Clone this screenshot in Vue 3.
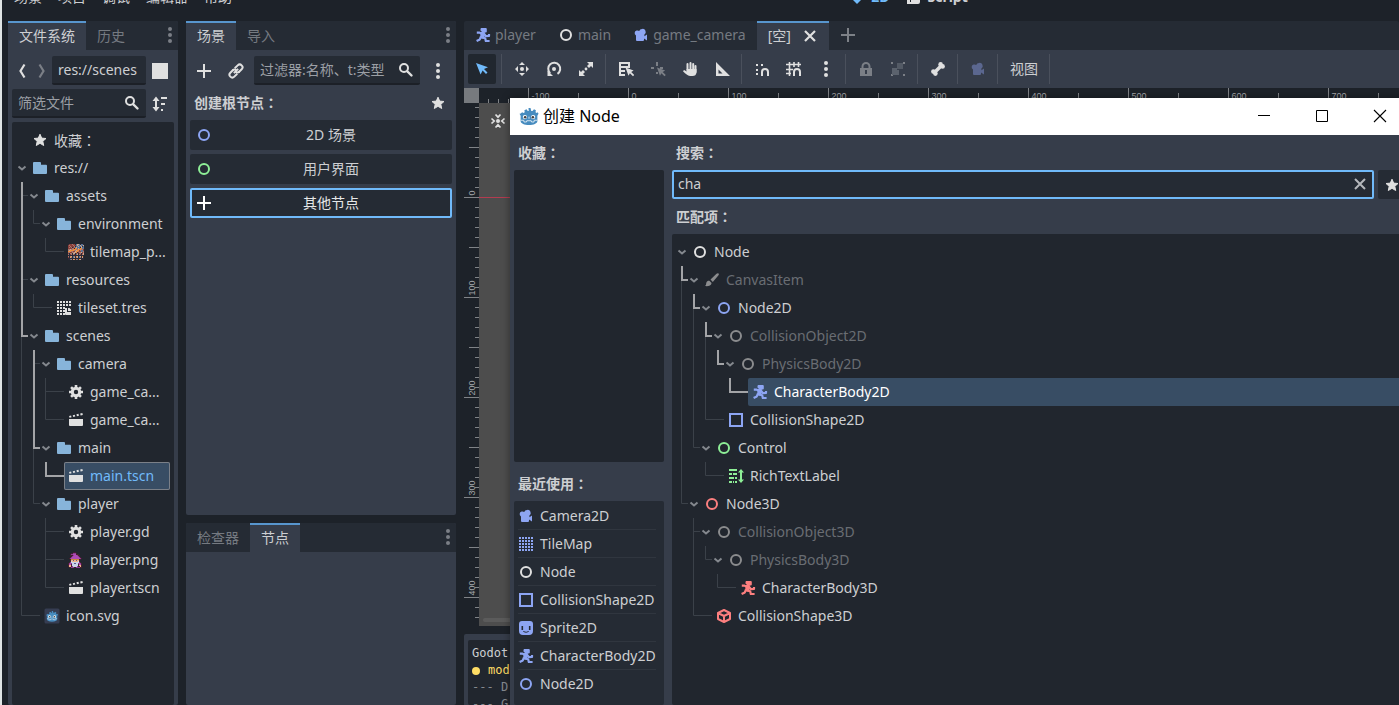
<script setup>
import { h, ref } from 'vue'

const W = '#e0e0e0'
const BLUE = '#8da5f3'
const RED = '#fc7f7f'
const GREEN = '#8eef97'
const GREY = '#8b8c8e'

const ring = (c) => `<circle cx="8" cy="8" r="5" fill="none" stroke="${c}" stroke-width="2"/>`
const runner = (c) =>
  `<g fill="none" stroke="${c}" stroke-width="2.2" stroke-linejoin="round"><path d="M1.8 5.6H4.6L7 7"/><path d="M8.800 6.500 11 9.200 14 9V7"/><path d="M7 10.500 10.200 11.200 10.800 14H14.600"/><path d="M6 9.500 4.800 12.400 1.600 14"/></g><path fill="${c}" d="M6.200 1H10.800a1 1 0 0 1 1 1v2.600a1 1 0 0 1-1 1H9.800L9.500 11.500H5L5.600 6 4.600 5H7L5.500 3.500V1.700z"/>`
const camera = (c) =>
  `<path fill="${c}" d="M9 2a3 3 0 0 0-2.800 2A2.600 2.600 0 0 0 3.600 3.600 2.600 2.600 0 0 0 3 8.400V13a1 1 0 0 0 1 1h6a1 1 0 0 0 1-1v-1.400l3 2V7.600l-2.600 1.600V7.400A3 3 0 0 0 9 2z"/>`
const gridDots = (n, size, step, c, skip = () => false) => {
  let s = ''
  for (let y = 0; y < n; y++)
    for (let x = 0; x < n; x++)
      if (!skip(x, y)) s += `<rect x="${1 + x * step}" y="${1 + y * step}" width="${size}" height="${size}" fill="${c}"/>`
  return s
}
const magnet = `<path fill="none" stroke="${W}" stroke-width="2" d="M8 15v-4a3 3 0 0 1 6 0v4"/>`
const cursor = 'M0 0l2.700 7.400 1.300-2.200 2.800 2.800 1.200-1.200-2.800-2.800L7.400 2.700z'

const pixels = (rows, palette) => {
  let s = ''
  rows.forEach((r, y) =>
    [...r].forEach((ch, x) => {
      if (palette[ch]) s += `<rect x="${x}" y="${y}" width="1" height="1" fill="${palette[ch]}"/>`
    })
  )
  return `<g shape-rendering="crispEdges">${s}</g>`
}
const godotHead = `<path fill="#478cbf" d="M1 6.200 2.600 5l.9.6L4.600 5l-.3-1.600L6 2.600l1 1.300h.8L7.600 1.600h1.600l.6 2.300h1L12 2.600l1.500.8L13.200 5l1 .6L15 5l.6 1.200-.9 1.600v4.200c0 2-3 3.200-6.700 3.200S1.300 14 1.300 12V7.800L.4 6.200z"/><circle cx="4.700" cy="8.800" r="1.700" fill="#fff"/><circle cx="11.300" cy="8.800" r="1.700" fill="#fff"/><circle cx="4.900" cy="8.900" r="1" fill="#414042"/><circle cx="11.100" cy="8.900" r="1" fill="#414042"/><path stroke="#fff" fill="none" stroke-width=".6" d="M1.500 11.400H3.800l.2 1.400h2l.2-1h3.600l.2 1h2l.2-1.400h2.300M8 8.500v1.700"/>`

const icons = {
  folder: '<path fill="#87b4da" d="M1 3a1 1 0 0 1 1-1h6a1 1 0 0 1 1 1v1.700h5a1 1 0 0 1 1 1V13a1 1 0 0 1-1 1H2a1 1 0 0 1-1-1z"/>',
  star: `<path fill="${W}" stroke="${W}" stroke-linejoin="round" d="m8 2.200 1.700 3.900 4.300.4-3.200 2.800.9 4.200L8 11.300l-3.700 2.200.9-4.200L2 6.500l4.300-.4z"/>`,
  gear: `<circle cx="8" cy="8" r="3.700" fill="none" stroke="${W}" stroke-width="3"/><path stroke="${W}" stroke-width="2.600" d="M8 1v3M8 12v3M1 8h3M12 8h3M3.050 3.050l2 2M10.950 10.950l2 2M3.050 12.950l2-2M10.950 5.050l2-2"/>`,
  scene: `<path fill="${W}" d="M1 7h14v6a1 1 0 0 1-1 1H2a1 1 0 0 1-1-1z"/><path stroke="${W}" stroke-width="2" d="m1.300 4.900 2-.5M5 4.100l2-.5M8.700 3.300l2-.5M12.400 2.500l2.200-.5"/>`,
  tileset: gridDots(5, 2, 3, W, (x, y) => x > 2 && y > 1) + `<path fill="${W}" d="M9 8h2v4h4v3H10a1 1 0 0 1-1-1zM12 8h1.500L15 9.500V11h-3z"/>`,
  tilemap: gridDots(5, 2, 3, BLUE),
  tiles: pixels(
    [
      '.aaabaa.cddc.cc.', 'abaaabaacdccdccd', 'aabaaab.ccdccd.c', 'abab.abcdccc.dcc',
      'aaaabb.eecdceecc', 'bbdbbeeebbeeebba', 'bdeeeebbdeeabcca', 'eeebbaadeebaaccb',
      'bbaabbdde.abbdab', 'a.bb.dd.ab.ab.ad', 'b.ab.ba.cd.ba.bd', '................',
      'b.ed.cb.ed.cd.e.', 'a.db.cd.bd.cb.d.', '................', '..cb.de.bc.ed...'
    ],
    { a: '#8b3f3a', b: '#a9796f', c: '#5a7596', d: '#c9a892', e: '#ef8c3b', '.': '#2b2a38' }
  ),
  wizard: pixels(
    [
      '.....rrr........', '...rrpppr.......', '..rppPPPrrr.....', '..rrrpPPPprr....',
      '...rpPPPPPpr....', '..rpPPPPPPPpr...', '.rpPPPPPPPPPpr..', '..roooooooorr...',
      '..ryykyykyyr....', '..rwyyyyyywr....', '.rpwwwwwwwwpr...', 'rpPpwwkkwwpPpr..',
      'rPPrwwwwwwrPPr..', 'ryyrwwwwwwryyr..', 'ryyrpwwwwprryr..', '.rrppprrpppprr..'
    ],
    { r: '#44202f', p: '#8d3c94', P: '#b04bb5', o: '#c9873f', y: '#f0b28a', w: '#c9d3ea', k: '#5d5b8a' }
  ),
  godotFile: `<rect width="15" height="15" x=".5" y=".5" rx="1.500" fill="#363d52"/><g transform="translate(1.800 1.800) scale(.78)">${godotHead}</g>`,
  godot: godotHead,
  node: ring(W), nodeGrey: ring(GREY), node2d: ring(BLUE), control: ring(GREEN), node3d: ring(RED),
  char2d: runner(BLUE), char3d: runner(RED),
  camera: camera(BLUE), cameraDim: camera('#5b678f'),
  shape2d: `<path fill="none" stroke="${BLUE}" stroke-width="2" d="M2 2h12v12H2z"/>`,
  shape3d: `<path fill="none" stroke="${RED}" stroke-width="2" stroke-linejoin="round" d="M8 2l6 3v6l-6 3-6-3V5zM2 5l6 3 6-3M8 8v6"/>`,
  sprite: `<path fill="${BLUE}" fill-rule="evenodd" d="M4 1h8a3 3 0 0 1 3 3v7a4 4 0 0 1-4 4H5a4 4 0 0 1-4-4V4a3 3 0 0 1 3-3zM3.500 6v4h1.600V6zm7.400 0v4h1.600V6zM5 11c.8 2.200 5.200 2.200 6 0l-.8 0c-.8.9-3.600.9-4.400 0z"/>`,
  brush: `<path fill="${GREY}" d="M14.500 1.500c.7.700.3 1.500-.2 2.100L8.800 9.900 6.500 7.600l6-5.800c.6-.5 1.400-.9 2-.3zM5.400 8.700l2.200 2.200C7.300 13.600 4 14.500 1 14c1.400-1 .9-2.300 1.400-3.600.5-1.300 1.700-2 3-1.700z"/>`,
  rich: `<path fill="none" stroke="${GREEN}" stroke-width="2" d="M1 2h8M1 6h3M5 6h4M1 10h5M7 10h2M1 14h3M5 14h1M7 14h2M13 3v10"/><path fill="${GREEN}" d="M13 1l3 3.500h-6zM13 15l3-3.500h-6z"/>`,
  plus: `<path stroke="${W}" stroke-width="2" d="M8 1v14M1 8h14"/>`,
  plusWhite: '<path stroke="#fff" stroke-width="2" d="M8 1v14M1 8h14"/>',
  plusDim: '<path stroke="#7d8187" stroke-width="2" d="M8 1v14M1 8h14"/>',
  close: `<path stroke="${W}" stroke-width="2.200" d="m3 3 10 10M13 3 3 13"/>`,
  clear: '<path stroke="#b4b7bb" stroke-width="2" d="m3 3 10 10M13 3 3 13"/>',
  dots: `<g fill="${W}"><circle cx="8" cy="2" r="2"/><circle cx="8" cy="8" r="2"/><circle cx="8" cy="14" r="2"/></g>`,
  dotsDim: '<g fill="#7b7f86"><circle cx="8" cy="2" r="2"/><circle cx="8" cy="8" r="2"/><circle cx="8" cy="14" r="2"/></g>',
  search: `<circle cx="6" cy="6" r="4" fill="none" stroke="${W}" stroke-width="2"/><path stroke="${W}" stroke-width="2.400" stroke-linecap="round" d="m9.500 9.500 4 4"/>`,
  link: `<g fill="none" stroke="${W}" stroke-width="2" transform="rotate(-45 8 8)"><path d="M7 5.200H2.800a2.800 2.800 0 0 0 0 5.600H7M9 5.200h4.200a2.800 2.800 0 0 1 0 5.600H9M5 8h6"/><path d="M6 5.200a2.800 2.800 0 0 1 2.800 2.800M10 10.800A2.800 2.800 0 0 1 7.200 8"/></g>`,
  back: `<path fill="none" stroke="${W}" stroke-width="2.200" d="M10.500 1.500 6.500 8l4 6.500"/>`,
  forward: '<path fill="none" stroke="#7b7f86" stroke-width="2.200" d="m5.500 1.500 4 6.500-4 6.500"/>',
  sort: `<path fill="none" stroke="${W}" stroke-width="2" d="M4 4v8M9 2h6M9 8h4M9 14h2"/><path fill="${W}" d="M4 .5 7.500 5h-7zM4 15.500 7.500 11h-7z"/>`,
  select: `<path fill="#70bafa" d="M2 2l4.600 11.500 2-4 3.400 3.500 1.500-1.500L10 8l4-1.700z"/>`,
  move: `<g fill="${W}"><circle cx="8" cy="8" r="2"/><path d="M8 1l3 3H5zM8 15l3-3H5zM1 8l3-3v6zM15 8l-3-3v6z"/></g>`,
  rotate: `<path fill="none" stroke="${W}" stroke-width="2" d="M4.200 12.200A6 6 0 1 1 11.500 12.800"/><circle cx="8" cy="8" r="2" fill="${W}"/><path fill="${W}" d="M1.500 9.500 7 15H1.500z"/>`,
  scale: `<path fill="${W}" d="M9 1h6v6l-2-2-2 2-2-2 2-2zM1 9l2 2 2-2 2 2-2 2 2 2H1z"/><circle cx="8" cy="8" r="1.400" fill="${W}"/>`,
  list: `<path fill="none" stroke="${W}" stroke-width="2" d="M2 1v14M2 2h10M2 6h10M2 10h5M2 14h5M11 1v6"/><path fill="${W}" d="${cursor}" transform="translate(7.500 6.500) scale(1.100)"/>`,
  pivot: `<path stroke="#7b7f86" stroke-width="2" d="M7 1v4M7 11v2M1 7h3M10 7h3"/><path fill="#7b7f86" d="${cursor}" transform="translate(7 6.500) scale(1.100)"/>`,
  pan: `<path fill="none" stroke="${W}" stroke-width="2" stroke-linecap="round" d="M5.500 3v7M8.500 2v7M11.200 3v6M13.500 5v6"/><path fill="${W}" d="M4.500 8h10v3.500a4 4 0 0 1-4 3.500H8C5.500 15 4 13 1 10.300l1-1.200 3 1.300z"/>`,
  ruler: `<path fill="${W}" fill-rule="evenodd" d="M2 1v14h14zM4.500 8.500l4 4h-4z"/>`,
  smart: `<path fill="${W}" d="M2 3h2v2H2zM7 3h2v2H7zM2 8h2v2H2zM2 12h2v2H2z"/>${magnet}`,
  gridSnap: `<path fill="none" stroke="${W}" stroke-width="1.600" d="M0 3.500h15M0 8.500h7M0 12.500h5M3.500 1v14M8 1v5M12.500 1v5"/>${magnet}`,
  lock: '<path fill="#7b7f86" fill-rule="evenodd" d="M8 1a4.500 4.500 0 0 0-4.500 4.500V7H2v8h12V7h-1.500V5.500A4.500 4.500 0 0 0 8 1zm0 2a2.500 2.500 0 0 1 2.500 2.500V7h-5V5.500A2.500 2.500 0 0 1 8 3zM7 9h2v4H7z"/>',
  group: '<path fill="#7b7f86" d="M1 1h2v2H1zM13 1h2v2h-2zM1 13h2v2H1zM13 13h2v2h-2z"/><path fill="#535a65" d="M7 2h6v6H7z"/><path fill="#5b626d" d="M2 7h5v2h2v5H2z"/>',
  bone: `<path stroke="${W}" stroke-width="3.600" d="m4.500 11.500 7-7"/><g fill="${W}"><circle cx="3.400" cy="10.600" r="2.300"/><circle cx="5.400" cy="12.600" r="2.300"/><circle cx="10.600" cy="3.400" r="2.300"/><circle cx="12.600" cy="5.400" r="2.300"/></g>`,
  focus: `<circle cx="8" cy="8" r="2" fill="${W}"/><path fill="none" stroke="${W}" stroke-width="1.700" d="M5.500 1.500 8 4.200l2.500-2.700M5.500 14.500 8 11.800l2.500 2.700M1.500 5.500 4.200 8l-2.700 2.500M14.500 5.500 11.800 8l2.700 2.500"/>`,
  mode2d: '<path fill="#70bafa" d="M7 1h2v9h4l-5 5-5-5h4z"/>',
  script: `<path fill="${W}" fill-rule="evenodd" d="M4 1h11v12a2 2 0 0 1-2 2H2V8h2zM5 8v5h1V8z"/>`,
  arrow: '<path fill="none" stroke="#84888e" stroke-width="2" d="m4.500 6.500 3.500 3 3.500-3"/>',
  winMin: '<path stroke="#000" d="M2 7.500h12"/>',
  winMax: '<path fill="none" stroke="#000" d="M2.500 2.500h11v11h-11z"/>',
  winClose: '<path stroke="#000" stroke-width="1.100" d="m2 2 12 12M14 2 2 14"/>'
}

const Icon = (props) =>
  h('svg', { viewBox: '0 0 16 16', width: props.size || 16, height: props.size || 16, 'aria-hidden': 'true', innerHTML: icons[props.name] })
Icon.props = ['name', 'size']

const files = [
  { d: 0, icon: 'star', text: '收藏', colon: true },
  { d: 0, icon: 'folder', text: 'res://', open: true },
  { d: 1, icon: 'folder', text: 'assets', open: true },
  { d: 2, icon: 'folder', text: 'environment', open: true },
  { d: 3, icon: 'tiles', text: 'tilemap_p...' },
  { d: 1, icon: 'folder', text: 'resources', open: true },
  { d: 2, icon: 'tileset', text: 'tileset.tres' },
  { d: 1, icon: 'folder', text: 'scenes', open: true, hot: true },
  { d: 2, icon: 'folder', text: 'camera', open: true },
  { d: 3, icon: 'gear', text: 'game_ca...' },
  { d: 3, icon: 'scene', text: 'game_ca...' },
  { d: 2, icon: 'folder', text: 'main', open: true, hot: true },
  { d: 3, icon: 'scene', text: 'main.tscn', hot: true, current: true },
  { d: 2, icon: 'folder', text: 'player', open: true },
  { d: 3, icon: 'gear', text: 'player.gd' },
  { d: 3, icon: 'wizard', text: 'player.png' },
  { d: 3, icon: 'scene', text: 'player.tscn' },
  { d: 1, icon: 'godotFile', text: 'icon.svg' }
]
const matches = [
  { d: 0, icon: 'node', text: 'Node', open: true },
  { d: 1, icon: 'brush', text: 'CanvasItem', open: true, hot: true, dim: true },
  { d: 2, icon: 'node2d', text: 'Node2D', open: true, hot: true },
  { d: 3, icon: 'nodeGrey', text: 'CollisionObject2D', open: true, hot: true, dim: true },
  { d: 4, icon: 'nodeGrey', text: 'PhysicsBody2D', open: true, hot: true, dim: true },
  { d: 5, icon: 'char2d', text: 'CharacterBody2D', hot: true, picked: true },
  { d: 3, icon: 'shape2d', text: 'CollisionShape2D' },
  { d: 2, icon: 'control', text: 'Control', open: true },
  { d: 3, icon: 'rich', text: 'RichTextLabel' },
  { d: 1, icon: 'node3d', text: 'Node3D', open: true },
  { d: 2, icon: 'nodeGrey', text: 'CollisionObject3D', open: true, dim: true },
  { d: 3, icon: 'nodeGrey', text: 'PhysicsBody3D', open: true, dim: true },
  { d: 4, icon: 'char3d', text: 'CharacterBody3D' },
  { d: 2, icon: 'shape3d', text: 'CollisionShape3D' }
]
const ROW = 28
const guides = (rows) => {
  const out = []
  rows.forEach((r, i) => {
    if (!r.d) return
    let p = i - 1
    while (rows[p].d >= r.d) p--
    const nudge = r.hot ? 0 : 0.5
    const x = 10 + 12 * (r.d - 1) - nudge
    const y = i * ROW + ROW / 2 - nudge
    out.push({ hot: !!r.hot, d: `M${x} ${(p + 1) * ROW}V${y}H${Math.floor(x) + (r.open ? 6 : 18) + (r.hot ? 0 : 1)}` })
  })
  return out.sort((a, b) => a.hot - b.hot)
}
const trees = { files: { rows: files, lines: guides(files) }, matches: { rows: matches, lines: guides(matches) } }

const recents = [
  ['camera', 'Camera2D'], ['tilemap', 'TileMap'], ['node', 'Node'], ['shape2d', 'CollisionShape2D'],
  ['sprite', 'Sprite2D'], ['char2d', 'CharacterBody2D'], ['node2d', 'Node2D']
]
const tools = [
  [['select', '选择', true]],
  [['move', '移动'], ['rotate', '旋转'], ['scale', '缩放']],
  [['list', '列表'], ['pivot', '轴心'], ['pan', '平移'], ['ruler', '标尺']],
  [['smart', '智能吸附'], ['gridSnap', '栅格吸附'], ['dots', '吸附选项']],
  [['lock', '锁定'], ['group', '编组']],
  [['bone', '骨骼']],
  [['cameraDim', '相机']]
]
const ticks = (zero, first, last) => {
  const out = []
  for (let i = first; i <= last; i++) {
    const major = i % 10 === 0
    out.push({ at: zero + i * 10 + 0.5, from: major ? 0 : i % 5 === 0 ? 5 : 11, label: major ? String(i * 10) : '' })
  }
  return out
}
const hTicks = ticks(149, -14, 200)
const vTicks = ticks(94, -9, 120)
const path = ref('res://scenes')
const query = ref('cha')
</script>

<template>
  <div class="editor">
    <header class="menubar">
      <nav class="menus">
        <button v-for="m in ['场景', '项目', '调试', '编辑器', '帮助']" :key="m">{{ m }}</button>
      </nav>
      <div class="modes">
        <button class="on"><Icon name="mode2d" />2D</button>
        <button><Icon name="script" />Script</button>
      </div>
    </header>

    <div class="workspace">
      <section class="dock files">
        <div class="tabs">
          <button class="tab active">文件系统</button>
          <button class="tab">历史</button>
          <button class="kebab" aria-label="面板选项"><Icon name="dotsDim" /></button>
        </div>
        <div class="files-body">
          <div class="line">
            <button class="bare nav" aria-label="后退"><Icon name="back" /></button>
            <button class="bare nav" aria-label="前进"><Icon name="forward" /></button>
            <div class="field grow"><input v-model="path" aria-label="路径" /></div>
            <button class="bare" aria-label="切换拆分模式"><span class="square"></span></button>
          </div>
          <div class="line">
            <div class="field grow"><input placeholder="筛选文件" aria-label="筛选文件" /><Icon name="search" /></div>
            <button class="bare" aria-label="排序"><Icon name="sort" /></button>
          </div>
          <div class="tree">
            <div class="rows">
              <svg class="guides" aria-hidden="true">
                <path v-for="(g, i) in trees.files.lines" :key="i" :d="g.d" :class="{ hot: g.hot }" />
              </svg>
              <div v-for="(r, i) in trees.files.rows" :key="i" class="row" :style="{ paddingLeft: 2 + 12 * r.d + 'px' }">
                <span class="twist"><Icon v-if="r.open" name="arrow" /></span>
                <span class="item" :class="{ current: r.current }"><Icon :name="r.icon" /><span>{{ r.text }}<i v-if="r.colon" class="colon">：</i></span></span>
              </div>
            </div>
          </div>
        </div>
      </section>

      <div class="column">
        <section class="dock scene">
          <div class="tabs">
            <button class="tab active">场景</button>
            <button class="tab">导入</button>
            <button class="kebab" aria-label="面板选项"><Icon name="dotsDim" /></button>
          </div>
          <div class="scene-body">
            <div class="scene-tools">
              <button class="bare wide" aria-label="添加节点"><Icon name="plus" /></button>
              <button class="bare wide" aria-label="实例化"><Icon name="link" /></button>
              <div class="field grow"><input placeholder="过滤器:名称、t:类型" aria-label="过滤器" /><Icon name="search" /></div>
              <button class="bare wide" aria-label="更多"><Icon name="dots" /></button>
            </div>
            <div class="root-title">
              <strong>创建根节点<i class="colon">：</i></strong>
              <button class="bare wide" aria-label="收藏的节点"><Icon name="star" /></button>
            </div>
            <div class="root-list">
              <button class="root"><Icon name="node2d" /><span>2D 场景</span></button>
              <button class="root"><Icon name="control" /><span>用户界面</span></button>
              <button class="root focus"><Icon name="plusWhite" /><span>其他节点</span></button>
            </div>
          </div>
        </section>
        <section class="dock inspector">
          <div class="tabs">
            <button class="tab">检查器</button>
            <button class="tab active">节点</button>
            <button class="kebab" aria-label="面板选项"><Icon name="dotsDim" /></button>
          </div>
        </section>
      </div>

      <main class="main">
        <div class="tabs">
          <button class="tab"><Icon name="char2d" />player</button>
          <button class="tab"><Icon name="node" />main</button>
          <button class="tab"><Icon name="camera" />game_camera</button>
          <button class="tab active empty">[空]<Icon name="close" /></button>
          <button class="add" aria-label="添加场景"><Icon name="plusDim" /></button>
        </div>
        <div class="toolbar">
          <template v-for="(g, gi) in tools" :key="gi">
            <button v-for="t in g" :key="t[0]" class="tool" :class="{ pressed: t[2] }" :aria-label="t[1]"><Icon :name="t[0]" /></button>
            <span class="sep"></span>
          </template>
          <button class="tool view">视图</button>
          <span class="sep"></span>
        </div>
        <div class="viewport">
          <div class="corner"></div>
          <svg class="ruler" aria-hidden="true">
            <g v-for="t in hTicks" :key="t.at">
              <path :d="`M${t.at} ${t.from}V15`" />
              <text v-if="t.label" :x="t.at + 3" y="11">{{ t.label }}</text>
            </g>
          </svg>
          <svg class="ruler" aria-hidden="true">
            <g v-for="t in vTicks" :key="t.at">
              <path :d="`M${t.from} ${t.at}H15`" />
              <text v-if="t.label" :transform="`translate(11 ${t.at - 2}) rotate(-90)`">{{ t.label }}</text>
            </g>
          </svg>
          <div class="canvas">
            <button class="bare focus-btn" aria-label="居中"><Icon name="focus" /></button>
            <div class="axis"></div>
            <div class="hscroll"></div>
          </div>
        </div>
        <div class="output">
          <div class="log">
            <p>Godot</p>
            <p class="warn"><span class="dot"></span>mod</p>
            <p class="mute">--- D</p>
            <p class="mute">--- G</p>
          </div>
        </div>
      </main>
    </div>

    <div class="dialog" role="dialog" aria-labelledby="dlg-title">
      <div class="titlebar">
        <Icon name="godot" :size="20" />
        <span id="dlg-title">创建 Node</span>
        <button aria-label="最小化"><Icon name="winMin" /></button>
        <button aria-label="最大化"><Icon name="winMax" /></button>
        <button aria-label="关闭"><Icon name="winClose" /></button>
      </div>
      <div class="dialog-body">
        <div class="side">
          <h2>收藏<i class="colon">：</i></h2>
          <div class="favs"></div>
          <h2 class="spaced">最近使用<i class="colon">：</i></h2>
          <ul class="recents">
            <li v-for="r in recents" :key="r[1]"><Icon :name="r[0]" />{{ r[1] }}</li>
          </ul>
        </div>
        <div class="results">
          <label class="h" for="q">搜索<i class="colon">：</i></label>
          <div class="search-row">
            <div class="query">
              <input id="q" v-model="query" />
              <button class="bare" aria-label="清除"><Icon name="clear" /></button>
            </div>
            <button class="fav" aria-label="收藏"><Icon name="star" /></button>
          </div>
          <h2>匹配项<i class="colon">：</i></h2>
          <div class="tree">
            <div class="rows">
              <svg class="guides" aria-hidden="true">
                <path v-for="(g, i) in trees.matches.lines" :key="i" :d="g.d" :class="{ hot: g.hot }" />
              </svg>
              <div v-for="r in trees.matches.rows" :key="r.text" class="row" :style="{ paddingLeft: 2 + 12 * r.d + 'px' }">
                <span class="twist"><Icon v-if="r.open" name="arrow" /></span>
                <span class="item" :class="{ dim: r.dim, picked: r.picked }"><Icon :name="r.icon" /><span>{{ r.text }}</span></span>
              </div>
            </div>
          </div>
        </div>
      </div>
    </div>
  </div>
</template>

<style>
body { margin: 0; background: #1d2229; }
</style>

<style scoped>
* { box-sizing: border-box; }
.editor {
  position: relative;
  display: flex;
  flex-direction: column;
  height: 100vh;
  padding-left: 6px;
  border-left: 2px solid #dfe4e4;
  overflow: hidden;
  background: #1d2229;
  color: #cdcfd2;
  font: 14px/20px "Noto Sans", "Noto Sans CJK SC", sans-serif;
}
button, input { font: inherit; color: inherit; border: 0; margin: 0; padding: 0; background: none; }
input { outline: 0; min-width: 0; width: 100%; }
input::placeholder { color: #9b9fa5; opacity: 1; }
svg { display: block; flex: none; }
.colon { font-family: "Noto Sans CJK TC", "Noto Sans CJK JP", sans-serif; font-style: normal; }

.menubar { flex: none; display: flex; justify-content: space-between; align-items: flex-end; height: 21px; padding: 0 31% 14px 0; }
.menus, .modes { display: flex; }
.menus button { padding: 0 8px; height: 20px; white-space: nowrap; }
.menus { margin-left: -2px; }
.modes { gap: 16px; font-weight: 700; }
.modes button { display: flex; align-items: center; gap: 6px; height: 20px; }
.modes .on { color: #70bafa; }

.workspace { flex: 1; min-height: 0; display: flex; gap: 8px; }
.dock { display: flex; flex-direction: column; background: #363d4a; border-radius: 2px; }
.files { width: 170px; flex: none; }
.column { width: 270px; flex: none; display: flex; flex-direction: column; gap: 8px; }
.scene { flex: 494 1 0; }
.inspector { flex: 182 1 0; }
.tabs { flex: none; display: flex; height: 29px; background: #252b34; border-radius: 2px 2px 0 0; }
.tab { display: flex; align-items: center; gap: 4px; padding: 0 11px; color: #757a81; white-space: nowrap; }
.tab.active { background: #363d4a; border-top: 2px solid #5896ce; padding-bottom: 2px; color: #cdcfd2; }
.tab.empty { gap: 11px; }
.kebab { margin-left: auto; width: 16px; padding-bottom: 1px; display: flex; align-items: center; justify-content: center; }
.main .tab { padding-bottom: 2px; }
.add { padding: 0 10px 2px 11px; }

.files-body { flex: 1; min-height: 0; display: flex; flex-direction: column; gap: 4px; padding: 6px 4px 0; }
.line { display: flex; align-items: center; gap: 6px; height: 29px; padding-right: 6px; }
.nav { width: 20px; margin-right: -6px; }
.field { display: flex; align-items: center; height: 29px; padding: 0 6px; background: #252b34; border-bottom: 2px solid #1c2027; border-radius: 2px; }
.bare { display: flex; align-items: center; justify-content: center; }
.bare.wide { width: 28px; height: 28px; }
.square { width: 16px; height: 16px; background: #e0e0e0; }
.grow { flex: 1; min-width: 0; }

.tree { flex: 1; min-height: 0; padding: 4px 4px 0 0; background: #21262e; border-radius: 2px; overflow: hidden; }
.rows { position: relative; }
.guides { position: absolute; inset: 0; width: 100%; height: 100%; }
.guides path { fill: none; stroke: #3b4149; stroke-width: 1; }
.guides path.hot { stroke: #a3a4a7; stroke-width: 2; }
.row { position: relative; display: flex; height: 28px; }
.twist { display: flex; align-items: center; width: 16px; margin-right: -2px; flex: none; }
.item { flex: 1; min-width: 0; display: flex; align-items: center; gap: 6px; padding-left: 4px; white-space: nowrap; border-radius: 2px; }
.item.current { background: #384d64; color: #70bafa; box-shadow: inset 0 0 0 1px #7b8088; }
.item.dim { color: #696d73; }
.item.picked { background: #384d64; color: #fff; }

.scene-body { padding: 6px 4px 0; }
.scene-tools { display: flex; align-items: center; gap: 4px; }
.root-title { display: flex; align-items: center; justify-content: space-between; height: 35px; padding-left: 4px; }
.root-list { display: flex; flex-direction: column; gap: 4px; }
.root { display: flex; align-items: center; gap: 4px; height: 30px; padding: 0 6px; background: #252b34; border-radius: 2px; }
.root span { flex: 1; }
.root.focus { box-shadow: inset 0 0 0 2px #70bafa; color: #e6e7e8; }

.main { flex: 1; min-width: 0; display: flex; flex-direction: column; }
.toolbar { flex: none; display: flex; align-items: center; gap: 4px; height: 38px; padding: 0 4px; background: #363d4a; }
.tool { display: flex; align-items: center; justify-content: center; width: 28px; height: 30px; border-radius: 2px; }
.tool.pressed { background: #21272f; }
.tool.view { width: 40px; }
.sep { width: 4px; height: 30px; background: linear-gradient(#4a505c, #4a505c) 1px 0 / 1px 100% no-repeat; }
.viewport { flex: 1; min-height: 0; display: grid; grid-template: 15px minmax(0, 1fr) / 15px minmax(0, 1fr); }
.corner { background: #777a7e; }
.ruler { width: 100%; height: 100%; background: #1d2229; overflow: hidden; }
.ruler path { stroke: #808387; }
.ruler text { fill: #a3a6a9; font: 9px "Liberation Sans", sans-serif; }
.canvas { position: relative; background: #4d4d4d; padding: 9px 10px; }
.focus-btn { width: 18px; height: 18px; }
.axis { position: absolute; left: 0; right: 0; top: 94px; height: 1px; background: #b33c50; }
.hscroll { position: absolute; left: 4px; right: 4px; bottom: 4px; height: 4px; border-radius: 2px; background: #5b5b5b; }
.output { flex: none; margin-top: 8px; padding: 6px 4px 0; background: #363d4a; border-radius: 2px 2px 0 0; }
.log { height: 65px; padding: 5px 4px 0; overflow: hidden; background: #21262e; border-radius: 2px; font: 12px/17px "DejaVu Sans Mono", "Liberation Mono", monospace; }
.log p { display: flex; align-items: center; margin: 0; white-space: pre; }
.warn { color: #ffdd65; gap: 8px; }
.dot { width: 8px; height: 8px; border-radius: 50%; background: #ffdd65; }
.mute { color: #85898e; }

.dialog { position: absolute; left: 508px; right: -10px; top: 98px; bottom: 0; display: flex; flex-direction: column; background: #363d4a; box-shadow: 0 0 8px rgba(0, 0, 0, 0.4); }
.titlebar { flex: none; display: flex; align-items: center; height: 37px; padding: 0 0 1px 9px; background: #fff; color: #000; font-size: 16px; }
.titlebar span { flex: 1; padding-left: 4px; }
.titlebar button { display: flex; align-items: center; justify-content: center; width: 58px; height: 36px; }
.dialog-body { flex: 1; min-height: 0; display: flex; gap: 8px; padding: 0 4px; }
.side { width: 150px; flex: none; display: flex; flex-direction: column; }
h2, .h { flex: none; display: block; margin: 0; padding-left: 4px; font-size: 14px; line-height: 35px; font-weight: 700; }
.spaced { padding-top: 4px; }
.favs { flex: 1; background: #21262e; border-radius: 2px; }
.recents { list-style: none; margin: 0; padding: 1px 4px 7px; background: #252b34; border-radius: 2px; }
.recents li { display: flex; align-items: center; gap: 6px; height: 28px; margin-right: 4px; border-bottom: 1px solid #30363f; white-space: nowrap; }
.recents li:last-child { border-bottom-color: transparent; }
.results { flex: 1; min-width: 0; display: flex; flex-direction: column; }
.search-row { display: flex; gap: 4px; height: 29px; }
.query { flex: 1; min-width: 0; display: flex; align-items: center; padding: 0 6px 1px; background: #252b34; border-radius: 2px; box-shadow: inset 0 0 0 2px #70bafa; }
.fav { width: 27px; display: flex; align-items: center; justify-content: center; background: #252b34; border-radius: 2px; }
.results .tree { padding-right: 0; }
</style>
